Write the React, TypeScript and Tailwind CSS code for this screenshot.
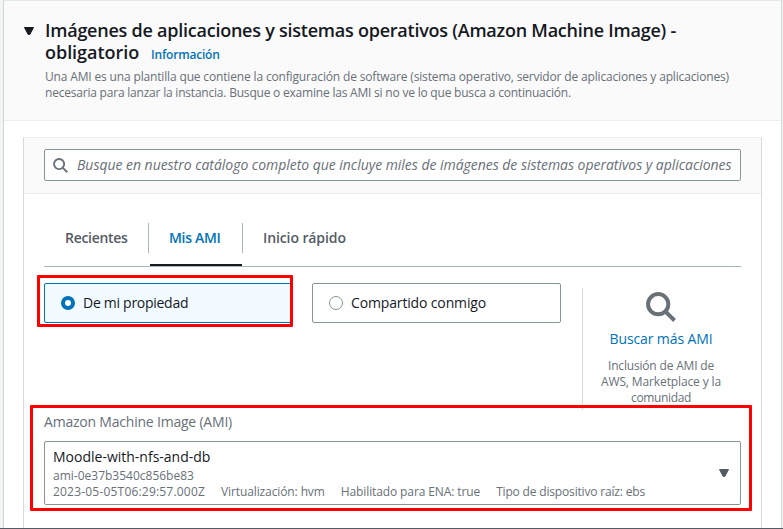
import type { ReactNode } from "react";

function SearchIcon({ size, stroke }: { size: number; stroke: number }) {
  return (
    <svg width={size} height={size} viewBox="0 0 16 16" fill="none" stroke="#687078" strokeWidth={stroke} className="block shrink-0">
      <circle cx="6.5" cy="6.5" r="5.4" />
      <path d="M10.3 10.3 L15.2 15.2" />
    </svg>
  );
}

function Caret({ color }: { color: string }) {
  return (
    <svg width="10" height="8" viewBox="0 0 10 8" className="block shrink-0">
      <path d="M0.5 0.5H9.5L5.8 7.5H4.2Z" fill={color} stroke={color} strokeWidth="1" strokeLinejoin="round" />
    </svg>
  );
}

function Radio({ checked }: { checked: boolean }) {
  return checked ? (
    <span className="block size-[14px] rounded-full border-4 border-[#0073bb] bg-white" />
  ) : (
    <span className="block size-[14px] rounded-full border border-[#879596] bg-white" />
  );
}

function Line({ className, children }: { className: string; children: ReactNode }) {
  return <div className={"whitespace-nowrap " + className}>{children}</div>;
}

export default function App() {
  return (
    <div className="relative flex h-[529px] w-[783px] flex-col overflow-hidden bg-[#f2f3f3] pl-[3px] font-['Open_Sans','Noto_Sans',sans-serif] text-[#16191f]">
      <section className="flex h-[528px] w-[779px] flex-col border-x border-t border-x-[#d0d6d6] border-t-[#e3e8e8] bg-white">
        <header className="flex h-[120px] border-b border-[#eaeded] bg-[#fafafa] pt-[18px] pl-5">
          <div className="w-[21px] pt-2">
            <Caret color="#16191f" />
          </div>
          <div>
            <h1 className="text-[18px] leading-[22px] font-semibold">
              <Line className="tracking-[-0.24px]">Imágenes de aplicaciones y sistemas operativos (Amazon Machine Image) -</Line>
              <div className="flex items-baseline">
                <span className="w-[106px] tracking-[-0.03px]">obligatorio</span>
                <a className="text-[12px] tracking-[-0.2px] text-[#0073bb]">Información</a>
              </div>
            </h1>
            <div className="mt-[3px] text-[12px] leading-4 text-[#687078]">
              <Line className="tracking-[-0.157px]">
                Una AMI es una plantilla que contiene la configuración de software (sistema operativo, servidor de aplicaciones y aplicaciones)
              </Line>
              <Line className="tracking-[-0.209px]">
                necesaria para lanzar la instancia. Busque o examine las AMI si no ve lo que busca a continuación.
              </Line>
            </div>
          </div>
        </header>

        <div className="mx-[19px] mt-4 flex flex-1 flex-col border-x border-t border-x-[#d5dbdb] border-t-[#eaeded]">
          <div className="h-[56px] border-b border-[#eaeded] bg-[#fafafa] px-5 pt-[11px]">
            <div className="flex h-8 items-center rounded-[2px] border border-[#879596] bg-white pl-2">
              <SearchIcon size={15} stroke={2} />
              <Line className="pb-[2px] pl-[9px] text-[14px] tracking-[-0.033px] text-[#687078] italic">
                Busque en nuestro catálogo completo que incluye miles de imágenes de sistemas operativos y aplicaciones
              </Line>
            </div>
          </div>

          <div className="flex flex-col px-5">
            <nav className="flex h-[73px] items-start border-b border-[#aab7b8] pt-[29px] text-[14px] leading-[30px] font-semibold text-[#545b64]">
              <div className="h-[30px] w-[105px] border-r border-[#aab7b8] pl-[21px] tracking-[-0.3px]">Recientes</div>
              <div className="relative h-[30px] w-[94px] border-r border-[#aab7b8] pl-[20px] tracking-[-0.3px] text-[#0073bb]">
                Mis AMI
                <span className="absolute top-[41px] left-px h-[2px] w-[92px] bg-[#16191f]" />
              </div>
              <div className="pl-[20px] tracking-[-0.1px]">Inicio rápido</div>
            </nav>

            <div className="mt-4 flex h-[122px]">
              <div className="flex h-10 w-[249px] items-center gap-2 rounded-[2px] border border-[#0073bb] bg-[#f1faff] pl-4 text-[14px] tracking-[-0.28px]">
                <Radio checked />
                <span className="pb-[2px]">De mi propiedad</span>
              </div>
              <div className="ml-[19px] flex h-10 w-[249px] items-center gap-2 rounded-[2px] border border-[#879596] pl-4 text-[14px] tracking-[-0.147px]">
                <Radio checked={false} />
                <span className="pb-[2px]">Compartido conmigo</span>
              </div>
              <div className="mt-[5px] ml-[21px] flex h-[122px] flex-1 flex-col items-center border-l border-[#d5dbdb] pt-1 pr-[2px] text-center">
                <SearchIcon size={30} stroke={2.1} />
                <a className="mt-[6px] text-[14px] leading-[22px] tracking-[-0.111px] text-[#0073bb]">Buscar más AMI</a>
                <div className="mt-2 text-[12px] leading-4 text-[#687078]">
                  <Line className="tracking-[-0.18px]">Inclusión de AMI de</Line>
                  <Line className="tracking-[-0.125px]">AWS, Marketplace y la</Line>
                  <Line className="tracking-[-0.353px]">comunidad</Line>
                </div>
              </div>
            </div>

            <label className="mt-[6px] text-[14px] leading-[22px] tracking-[-0.209px] text-[#687078]">Amazon Machine Image (AMI)</label>
            <div className="mt-2 flex h-16 items-center justify-between rounded-[2px] border border-[#879596] pr-[11px] pl-2">
              <div className="text-[12px] leading-4 text-[#687078]">
                <div className="text-[14px] leading-[22px] text-[#16191f]">Moodle-with-nfs-and-db</div>
                <div>ami-0e37b3540c856be83</div>
                <div className="flex gap-4 whitespace-nowrap">
                  <span className="tracking-[0.196px]">2023-05-05T06:29:57.000Z</span>
                  <span className="tracking-[-0.11px]">Virtualización: hvm</span>
                  <span className="tracking-[-0.11px]">Habilitado para ENA: true</span>
                  <span className="tracking-[-0.17px]">Tipo de dispositivo raíz: ebs</span>
                </div>
              </div>
              <Caret color="#545b64" />
            </div>
          </div>
        </div>
      </section>
      <div className="-ml-[3px] h-px bg-[#545b64]" />

      <div className="absolute top-[275px] left-[37px] h-[52px] w-[256px] rounded-[1px] border-[3px] border-[#ff0000]" />
      <div className="absolute top-[405px] left-[30px] h-[106px] w-[722px] rounded-[1px] border-[3px] border-[#ff0000]" />
    </div>
  );
}
